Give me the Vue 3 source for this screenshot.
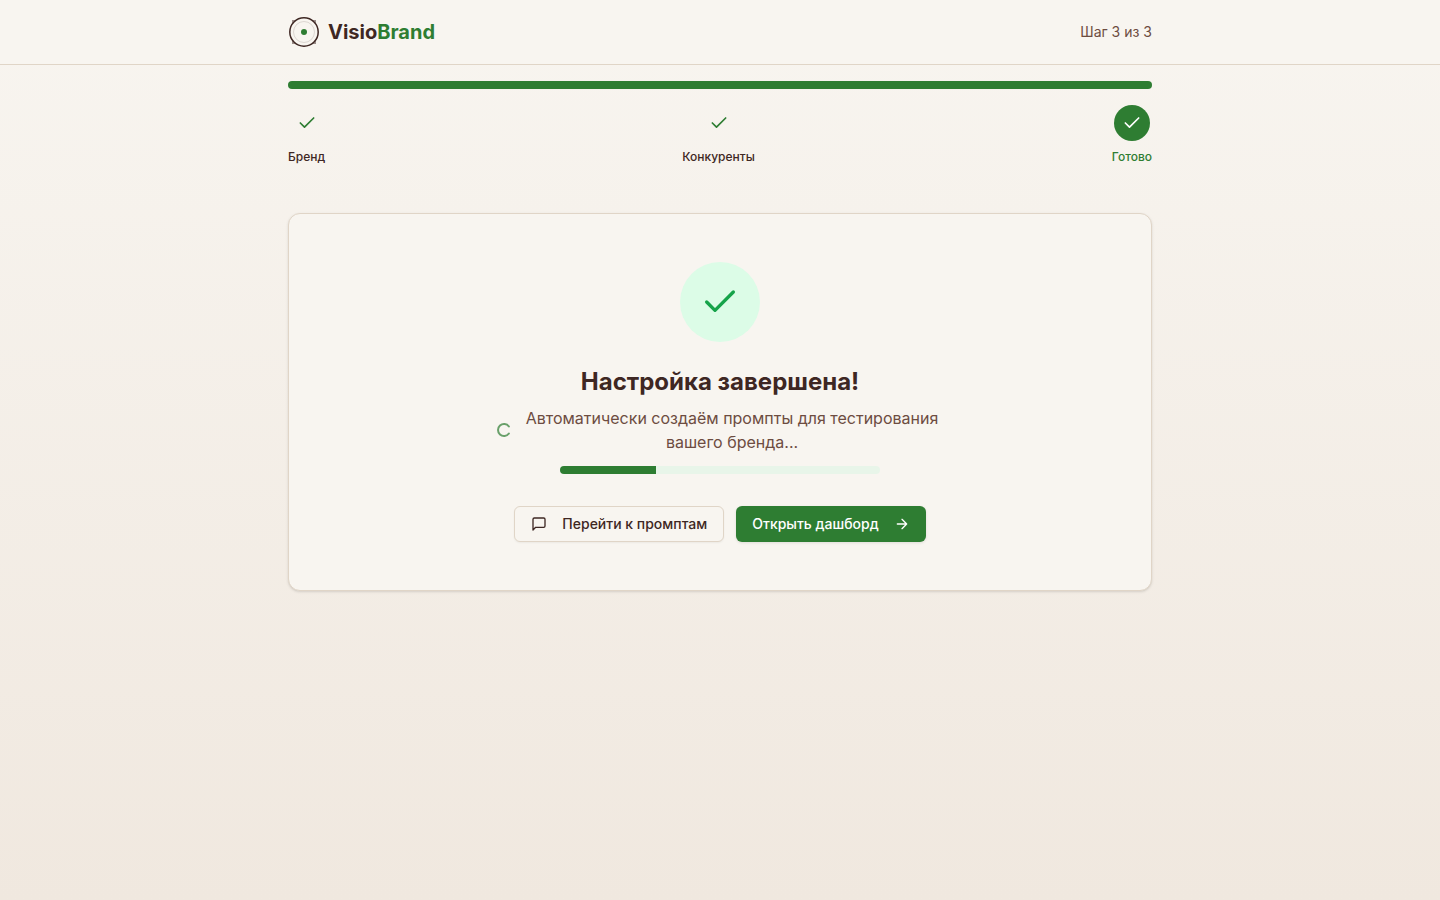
<script setup>
const steps = [
  { label: 'Бренд', active: false },
  { label: 'Конкуренты', active: false },
  { label: 'Готово', active: true },
]
const generated = 30
</script>

<template>
  <div class="page">
    <header class="header">
      <div class="container header-row">
        <div class="brand">
          <svg class="logo" viewBox="0 0 32 32" fill="none" aria-hidden="true">
            <g stroke="#3e2723" stroke-opacity="0.5" stroke-width="1.5">
              <path d="M4.75 7V4.75H7M25 4.75h2.25V7M27.25 25v2.25H25M7 27.25H4.75V25" />
            </g>
            <circle cx="16" cy="16" r="14.2" stroke="#3e2723" stroke-width="1.5" />
            <circle cx="16" cy="16" r="10.5" stroke="#3e2723" stroke-opacity="0.15" stroke-width="1" />
            <circle cx="16" cy="16" r="3" fill="#2e7d32" />
          </svg>
          <span class="brand-name">Visio<span class="accent">Brand</span></span>
        </div>
        <span class="step-count">Шаг 3 из 3</span>
      </div>
    </header>

    <main class="container main">
      <div class="progress" role="progressbar" aria-label="Прогресс настройки" aria-valuenow="100">
        <div class="progress-fill" :style="{ width: '100%' }"></div>
      </div>

      <ol class="steps">
        <li v-for="step in steps" :key="step.label" class="step" :class="{ active: step.active }">
          <span class="step-icon">
            <svg class="icon-20" viewBox="0 0 24 24" aria-hidden="true"><path d="M20 6 9 17l-5-5" /></svg>
          </span>
          <span class="step-label">{{ step.label }}</span>
        </li>
      </ol>

      <section class="card">
        <div class="success">
          <svg class="icon-40" viewBox="0 0 24 24" aria-hidden="true"><path d="M20 6 9 17l-5-5" /></svg>
        </div>
        <h1 class="title">Настройка завершена!</h1>
        <div class="status">
          <svg class="icon-16 spinner" viewBox="0 0 24 24" aria-hidden="true"><path d="M19.3 17.3a9 9 0 1 1 0-10.6" /></svg>
          <p>Автоматически создаём промпты для тестирования вашего бренда...</p>
        </div>
        <div class="progress generation" role="progressbar" aria-label="Создание промптов" :aria-valuenow="generated">
          <div class="progress-fill" :style="{ width: generated + '%' }"></div>
        </div>
        <div class="actions">
          <button type="button" class="button outline">
            <svg class="icon-16" viewBox="0 0 24 24" aria-hidden="true"><path d="M21 15a2 2 0 0 1-2 2H7l-4 4V5a2 2 0 0 1 2-2h14a2 2 0 0 1 2 2z" /></svg>
            Перейти к промптам
          </button>
          <button type="button" class="button primary">
            Открыть дашборд
            <svg class="icon-16" viewBox="0 0 24 24" aria-hidden="true"><path d="M5 12h14M12 5l7 7-7 7" /></svg>
          </button>
        </div>
      </section>
    </main>
  </div>
</template>

<style>
body {
  margin: 0;
}
</style>

<style scoped>
.page {
  min-height: 100vh;
  background: linear-gradient(to bottom, #f8f5f0, #f0e8df);
  color: #3e2723;
  font-family: Inter, "Liberation Sans", sans-serif;
  font-size: 16px;
  line-height: 24px;
}

.container {
  box-sizing: border-box;
  max-width: 896px;
  margin: 0 auto;
  padding: 0 16px;
}

.header {
  border-bottom: 1px solid #e0d5c7;
  background: #f8f5f0;
}

.header-row {
  display: flex;
  align-items: center;
  justify-content: space-between;
  height: 64px;
}

.brand {
  display: flex;
  align-items: center;
  gap: 8px;
}

.logo {
  width: 32px;
  height: 32px;
}

.brand-name {
  font-size: 20px;
  font-weight: 700;
  line-height: 28px;
}

.accent {
  color: #2e7d32;
}

.step-count {
  color: #6d4c41;
  font-size: 14px;
  line-height: 20px;
}

.main {
  padding-top: 16px;
  padding-bottom: 32px;
}

.progress {
  height: 8px;
  overflow: hidden;
  border-radius: 4px;
  background: #e8f5e9;
}

.progress-fill {
  height: 100%;
  background: #2e7d32;
}

.steps {
  display: flex;
  justify-content: space-between;
  margin: 16px 0 48px;
  padding: 0;
  list-style: none;
}

.step {
  display: flex;
  flex-direction: column;
  align-items: center;
  gap: 8px;
  font-size: 12px;
  font-weight: 500;
  line-height: 16px;
}

.step-icon {
  display: flex;
  align-items: center;
  justify-content: center;
  width: 36px;
  height: 36px;
  border-radius: 50%;
  color: #2e7d32;
}

.active {
  color: #2e7d32;
}

.active .step-icon {
  background: #2e7d32;
  color: #fff;
}

svg[class^="icon"] {
  flex-shrink: 0;
  fill: none;
  stroke: currentColor;
  stroke-width: 2;
  stroke-linecap: round;
  stroke-linejoin: round;
}

.icon-16 {
  width: 16px;
  height: 16px;
}

.icon-20 {
  width: 20px;
  height: 20px;
}

.icon-40 {
  width: 40px;
  height: 40px;
}

.card {
  display: flex;
  flex-direction: column;
  align-items: center;
  padding: 48px;
  border: 1px solid #e0d5c7;
  border-radius: 12px;
  background: #f8f5f0;
  box-shadow: 0 1px 3px rgb(0 0 0 / 10%), 0 1px 2px -1px rgb(0 0 0 / 10%);
}

.success {
  display: flex;
  align-items: center;
  justify-content: center;
  width: 80px;
  height: 80px;
  border-radius: 50%;
  background: #dcfce7;
  color: #16a34a;
}

.title {
  margin: 24px 0 8px;
  font-size: 24px;
  font-weight: 700;
  line-height: 32px;
}

.status {
  display: flex;
  align-items: center;
  gap: 8px;
  max-width: 448px;
  color: #6d4c41;
  text-align: center;
}

.status p {
  margin: 0;
}

svg.spinner {
  color: #2e7d32;
  stroke-width: 3;
  opacity: 0.7;
}

.generation {
  width: 100%;
  max-width: 320px;
  margin-top: 12px;
}

.actions {
  display: flex;
  flex-wrap: wrap;
  justify-content: center;
  gap: 12px;
  margin-top: 32px;
}

.button {
  display: flex;
  align-items: center;
  gap: 15px;
  box-sizing: border-box;
  height: 36px;
  padding: 0 16px;
  border: 0;
  border-radius: 6px;
  font-family: inherit;
  font-size: 14px;
  font-weight: 500;
  line-height: 20px;
  box-shadow: 0 1px 2px rgb(0 0 0 / 5%);
  cursor: pointer;
}

.outline {
  border: 1px solid #e0d5c7;
  background: #f8f5f0;
  color: #3e2723;
}

.primary {
  background: #2e7d32;
  color: #fff;
  box-shadow: 0 1px 3px rgb(0 0 0 / 10%);
}
</style>
